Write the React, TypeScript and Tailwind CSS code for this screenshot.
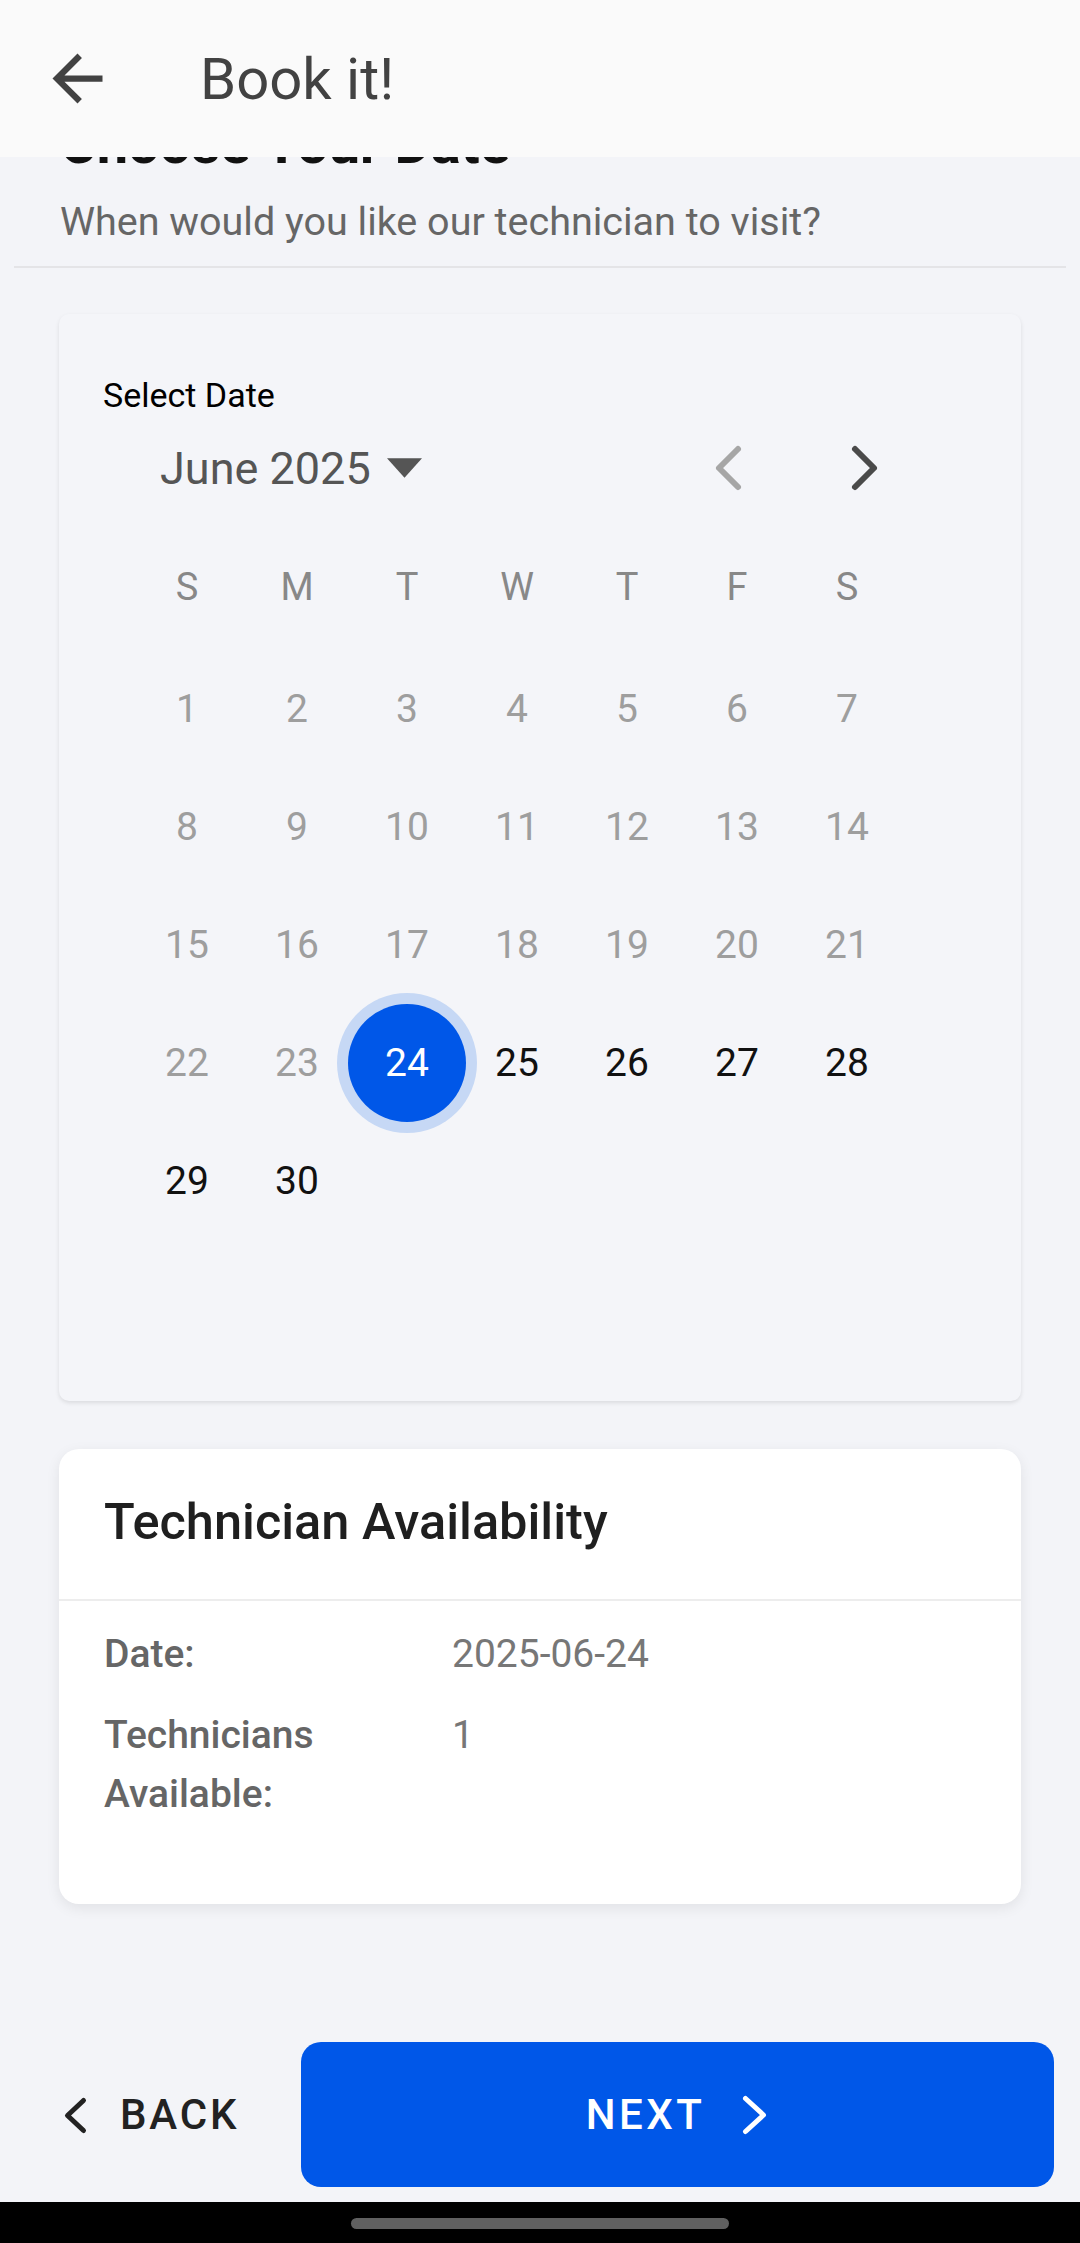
import React from "react";

const days: number[][] = [
  [1, 2, 3, 4, 5, 6, 7],
  [8, 9, 10, 11, 12, 13, 14],
  [15, 16, 17, 18, 19, 20, 21],
  [22, 23, 24, 25, 26, 27, 28],
  [29, 30],
];

const weekdays = ["S", "M", "T", "W", "T", "F", "S"];

function DayCell({ d }: { d: number }) {
  if (d === 24) {
    return (
      <div className="h-[118px] flex items-center justify-center">
        <div className="flex-none w-[118px] h-[118px] rounded-full bg-[#0057e8] ring-[11px] ring-[#c6d8f5] flex items-center justify-center text-white text-[39px] leading-none">
          {d}
        </div>
      </div>
    );
  }
  const past = d < 24;
  return (
    <div
      className={
        past
          ? "h-[118px] flex items-center justify-center text-[39px] leading-none text-[#9e9e9e]"
          : "h-[118px] flex items-center justify-center text-[39px] leading-none text-[#111111]"
      }
    >
      {d}
    </div>
  );
}

export default function App() {
  return (
    <div className="relative w-[1080px] h-[2243px] bg-[#f3f4f8] flex flex-col overflow-hidden font-['Roboto','Noto_Sans',sans-serif]">
      {/* App bar (overlays scrolled content) */}
      <div className="absolute top-0 inset-x-0 z-10 h-[157px] bg-[#fafafa] flex items-center pl-[40px]">
        <svg width="75" height="75" viewBox="0 0 24 24" fill="#424242">
          <path d="M20 11H7.83l5.59-5.59L12 4l-8 8 8 8 1.41-1.41L7.83 13H20v-2z" />
        </svg>
        <div className="ml-[85px] text-[58px] leading-none text-[#424242]">Book it!</div>
      </div>

      {/* Scrolled content */}
      <div className="px-[14px] pt-[116px]">
        <div className="px-[46px]">
          <div className="h-[56px] text-[56px] leading-none font-bold text-[#111111] whitespace-nowrap">
            Choose Your Date
          </div>
          <div className="mt-[30px] h-[40px] text-[39.5px] leading-none text-[#666666] whitespace-nowrap">
            When would you like our technician to visit?
          </div>
        </div>
        <div className="mt-[24px] h-[2px] bg-[#e4e4e7]" />

        {/* Calendar card */}
        <div className="mt-[46px] mx-[45px] bg-[#f4f5f9] rounded-[10px] shadow-[0_2px_4px_rgba(0,0,0,0.10)] pt-[59px] pb-[161px]">
          <div className="h-[44px] flex items-center pl-[44px] text-[34px] leading-none text-black">
            Select Date
          </div>
          <div className="mt-[21px] h-[60px] flex items-center pl-[101px] pr-[137px]">
            <div className="text-[45px] leading-none text-[#555555]">June 2025</div>
            <svg className="ml-[16px]" width="35" height="20" viewBox="0 0 36 20">
              <polygon points="0,0 36,0 18,20" fill="#555555" />
            </svg>
            <div className="flex-1" />
            <svg width="40" height="56" viewBox="0 0 40 56">
              <path d="M29 9 L10 28 L29 47" stroke="#a6a6a6" strokeWidth="6" fill="none" strokeLinecap="round" strokeLinejoin="round" />
            </svg>
            <svg className="ml-[95px]" width="40" height="56" viewBox="0 0 40 56">
              <path d="M11 9 L30 28 L11 47" stroke="#4a4a4a" strokeWidth="6" fill="none" strokeLinecap="round" strokeLinejoin="round" />
            </svg>
          </div>
          <div className="mt-[59px] ml-[73px] w-[770px] grid grid-cols-7 h-[60px]">
            {weekdays.map((w, i) => (
              <div key={i} className="flex items-center justify-center text-[38px] leading-none text-[#888888]">
                {w}
              </div>
            ))}
          </div>
          <div className="mt-[33px] ml-[73px] w-[770px] grid grid-cols-7">
            {days.map((row, ri) =>
              row.map((d) => <DayCell key={`${ri}-${d}`} d={d} />)
            )}
          </div>
        </div>

        {/* Availability card */}
        <div className="mt-[48px] mx-[45px] bg-white rounded-[20px] shadow-[0_4px_14px_rgba(0,0,0,0.08)]">
          <div className="h-[152px] pb-[4px] flex items-center pl-[45px] border-b-2 border-[#ededed] text-[50.5px] leading-none font-medium text-[#1f1f1f]">
            Technician Availability
          </div>
          <div className="pl-[45px] pt-[24px] pb-[80px] grid grid-cols-[348px_1fr] gap-y-[22px] text-[39px] leading-[59px]">
            <div className="font-medium text-[#666666]">Date:</div>
            <div className="text-[#777777]">2025-06-24</div>
            <div className="font-medium text-[#666666] pr-[90px]">Technicians Available:</div>
            <div className="text-[#777777]">1</div>
          </div>
        </div>
      </div>

      <div className="flex-1" />

      {/* Bottom actions */}
      <div className="h-[145px] flex items-stretch pr-[26px]">
        <div className="flex items-center pl-[60px]">
          <svg width="30" height="44" viewBox="0 0 30 44">
            <path d="M23.5 7.5 L7.5 22.5 L23.5 37.5" stroke="#222222" strokeWidth="5" fill="none" strokeLinecap="round" strokeLinejoin="round" />
          </svg>
          <div className="ml-[30px] text-[42px] leading-none font-medium tracking-[2.8px] text-[#222222]">BACK</div>
        </div>
        <div className="flex-1" />
        <div className="w-[753px] rounded-[20px] bg-[#0057e8] flex items-center justify-center">
          <div className="text-[42px] leading-none font-medium tracking-[3.5px] text-white">NEXT</div>
          <svg className="ml-[34px]" width="30" height="44" viewBox="0 0 30 44">
            <path d="M6.5 5.5 L24.5 22 L6.5 38.5" stroke="#ffffff" strokeWidth="5" fill="none" strokeLinecap="round" strokeLinejoin="round" />
          </svg>
        </div>
      </div>
      <div className="h-[15px]" />

      {/* System nav bar */}
      <div className="h-[41px] bg-black flex justify-center">
        <div className="mt-[16px] w-[378px] h-[11px] rounded-full bg-[#606060]" />
      </div>
    </div>
  );
}
